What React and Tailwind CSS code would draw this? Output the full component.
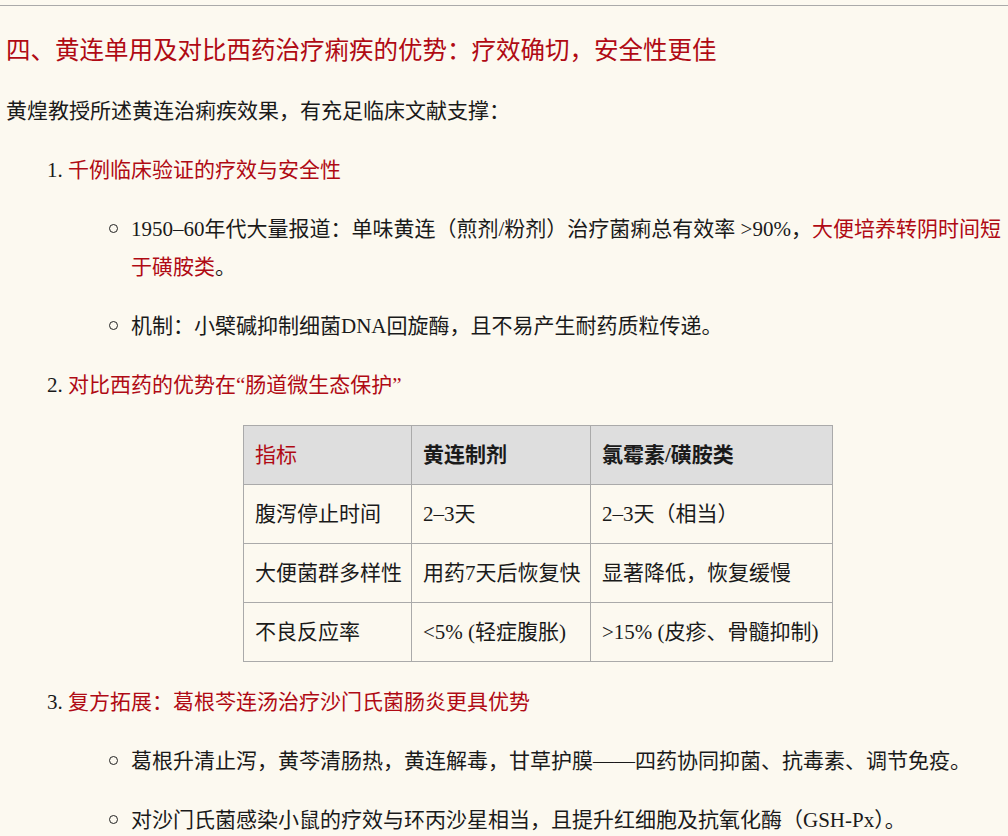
export default function App() {
  const red = 'text-[#b00a14]'
  const Bullet = ({ children, cls = '' }) => (
    <li className={`flex ${cls}`}>
      <span className="w-[22px] shrink-0 flex justify-start pt-[14px]">
        <span className="block w-[9px] h-[9px] rounded-full border-[1.5px] border-[#222]" />
      </span>
      <span className="flex-1">{children}</span>
    </li>
  )
  const rows = [
    ['腹泻停止时间', '2–3天', '2–3天（相当）'],
    ['大便菌群多样性', '用药7天后恢复快', '显著降低，恢复缓慢'],
    ['不良反应率', '<5% (轻症腹胀)', '>15% (皮疹、骨髓抑制)'],
  ]
  return (
    <div className="w-[1008px] h-[836px] overflow-hidden bg-[#fcf9f0] text-[#1a1a1a] text-[21px] leading-[38px]" style={{ fontFamily: '"Liberation Serif","Noto Sans CJK SC",serif' }}>
      <div className="border-t border-[#aaa] mt-[5px]" />
      <h2 className={`${red} text-[24.5px] leading-[32px] mt-[27px] px-[6px]`} style={{ fontFamily: '"Noto Sans CJK SC",sans-serif' }}>四、黄连单用及对比西药治疗痢疾的优势：疗效确切，安全性更佳</h2>
      <p className="px-[6px] mt-[27px]">黄煌教授所述黄连治痢疾效果，有充足临床文献支撑：</p>
      <div className="pl-[47px] mt-[21px]">
        <div>1. <span className={red}>千例临床验证的疗效与安全性</span></div>
        <ul className="pl-[62px] mt-[21px] pr-[2px]">
          <Bullet>1950–60年代大量报道：单味黄连（煎剂/粉剂）治疗菌痢总有效率 &gt;90%，<span className={red}>大便培养转阴时间短于磺胺类</span>。</Bullet>
          <Bullet cls="mt-[21px]">机制：小檗碱抑制细菌DNA回旋酶，且不易产生耐药质粒传递。</Bullet>
        </ul>
        <div className="mt-[21px]">2. <span className={red}>对比西药的优势在“肠道微生态保护”</span></div>
        <table className="ml-[196px] mt-[21px] border-collapse border border-[#aaa] table-fixed w-[590px]">
          <thead>
            <tr className="bg-[#dedede] h-[59px]">
              <th className={`${red} font-normal text-left border border-[#aaa] px-[11px] w-[168px]`}>指标</th>
              <th className="text-left border border-[#aaa] px-[11px] w-[179px]">黄连制剂</th>
              <th className="text-left border border-[#aaa] px-[11px]">氯霉素/磺胺类</th>
            </tr>
          </thead>
          <tbody>
            {rows.map((r) => (
              <tr key={r[0]} className="h-[59px]">
                {r.map((c, i) => <td key={i} className="border border-[#aaa] px-[11px] whitespace-nowrap">{c}</td>)}
              </tr>
            ))}
          </tbody>
        </table>
        <div className="mt-[21px]">3. <span className={red}>复方拓展：葛根芩连汤治疗沙门氏菌肠炎更具优势</span></div>
        <ul className="pl-[62px] mt-[21px]">
          <Bullet>葛根升清止泻，黄芩清肠热，黄连解毒，甘草护膜——四药协同抑菌、抗毒素、调节免疫。</Bullet>
          <Bullet cls="mt-[21px]">对沙门氏菌感染小鼠的疗效与环丙沙星相当，且提升红细胞及抗氧化酶（GSH-Px）。</Bullet>
        </ul>
      </div>
    </div>
  )
}
